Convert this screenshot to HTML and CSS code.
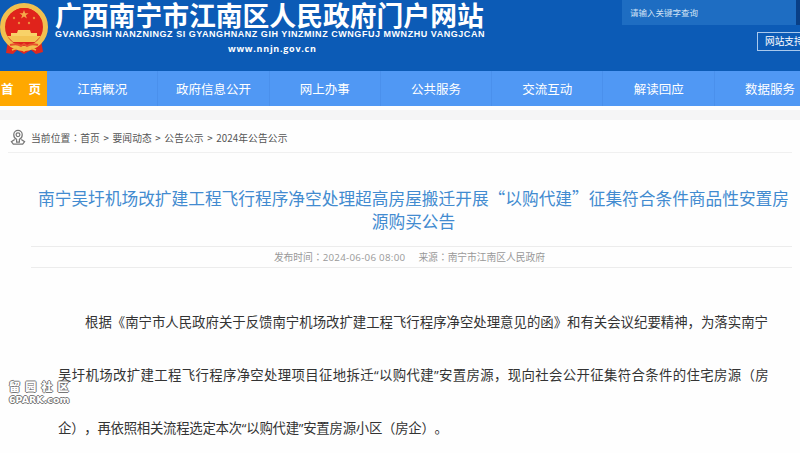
FILE: index.html
```html
<!DOCTYPE html>
<html lang="zh-CN">
<head>
<meta charset="utf-8">
<title>广西南宁市江南区人民政府门户网站</title>
<link rel="stylesheet" href="styles.css">
</head>
<body>
<header class="header">
  <svg class="emblem" viewBox="0 0 48 52">
    <path d="M8 37 L6 50 L13 51 L17 47 L24 51 L31 47 L36 51 L43 49 L41 37Z" fill="#df2820"/>
    <ellipse cx="24" cy="24" rx="21.500" ry="21.500" fill="#d92a1e" stroke="#f1c04f" stroke-width="5"/>
    <circle cx="24" cy="23" r="18" fill="#e0231b"/>
    <path d="M24 7l1.2 3.2h3.4l-2.8 2 1.1 3.3-2.9-2-2.9 2 1.1-3.3-2.8-2h3.4z" fill="#f5a94a"/>
    <g fill="#ee8c3d"><circle cx="14" cy="15" r="1.200"/><circle cx="34" cy="15" r="1.200"/><circle cx="19" cy="20" r="1.200"/><circle cx="29" cy="20" r="1.200"/></g>
    <path d="M18 27h12l1 3h6v3H11v-3h6z" fill="#f8d268"/>
    <path d="M7 33h34l-6 6H13z" fill="#f3c352"/>
    <path d="M10 42q8-2 11 1l3-2 3 2q4-3 11-1" fill="none" stroke="#e8502c" stroke-width="2"/>
    <path d="M12 47l5-2m19 2-5-2M20 45h8l-4 3z" fill="#f2b944" stroke="#f2b944" stroke-width="1.500"/>
  </svg>
  <div class="brand">
    <h1 class="site-name">广西南宁市江南区人民政府门户网站</h1>
    <p class="latin-name">GVANGJSIH NANZNINGZ SI GYANGHNANZ GIH YINZMINZ CWNGFUJ MWNZHU VANGJCAN</p>
    <p class="site-url">www.nnjn.gov.cn</p>
  </div>
  <div class="tools">
    <div class="search"><span class="search-field">请输入关键字查询</span><span class="search-button"></span></div>
    <a class="support">网站支持</a>
  </div>
</header>
<nav class="nav">
  <a class="home">首<span></span>页</a>
  <a class="item">江南概况</a><a class="item">政府信息公开</a><a class="item">网上办事</a><a class="item">公共服务</a><a class="item">交流互动</a><a class="item">解读回应</a><a class="item">数据服务</a>
</nav>
<div class="strip"></div>
<main class="page">
  <div class="crumbs">
    <svg class="pin" viewBox="0 0 17 17" fill="none" stroke="#777" stroke-width="1.300">
      <path d="M5 10.500 1.500 13 3.500 15.500h10l2-2.500L12 10.500"/>
      <path d="M7 13.500V10.500C5 9.500 4 8 4 5.500a4.500 4.500 0 0 1 9 0c0 2.500-1 4-3 5v3z"/>
      <circle cx="8.500" cy="5.500" r="2"/>
    </svg>
    <span class="crumb-text">当前位置<i lang="zh-TW">：</i>首页 &gt; 要闻动态 &gt; 公告公示 &gt; 2024年公告公示</span>
  </div>
  <h2 class="title">南宁吴圩机场改扩建工程飞行程序净空处理超高房屋搬迁开展“以购代建”征集符合条件商品性安置房<br>源购买公告</h2>
  <div class="meta"><span>发布时间<i lang="zh-TW">：</i><span class="date">2024-06-06 08:00</span></span><span>来源<i lang="zh-TW">：</i>南宁市江南区人民政府</span></div>
  <p class="content">根据《南宁市人民政府关于反馈南宁机场改扩建工程飞行程序净空处理意见的函》和有关会议纪要精神，为落实南宁<br><span class="second">吴圩机场改扩建工程飞行程序净空处理项目征地拆迁<q>“</q>以购代建<q>”</q>安置房源，现向社会公开征集符合条件的住宅房源<i lang="zh-TW">（</i>房</span><br><span class="third">企<i lang="zh-TW">）</i>，再依照相关流程选定本次<q>“</q>以购代建<q>”</q>安置房源小区<i lang="zh-TW">（</i>房企<i lang="zh-TW">）</i>。</span></p>
</main>
<div class="watermark"><div class="wm-cn">留园社区</div><div class="wm-en">6PARK.com</div></div>
</body>
</html>
```
FILE: styles.css
```css
* { box-sizing: border-box; }
body {
  margin: 0;
  width: 800px;
  height: 453px;
  overflow: hidden;
  background: #fefefe;
  font-family: "Noto Sans CJK SC", sans-serif;
  text-spacing-trim: space-all;
  white-space: nowrap;
}
h1, h2, p { margin: 0; }
/* centred punctuation */
i { font-family: "Noto Sans CJK TC", sans-serif; font-style: normal; }
.header {
  display: flex;
  height: 71px;
  background: #0c5bb6;
  color: #fff;
  overflow: hidden;
}
.emblem { width: 48px; height: 52px; margin-top: 3px; flex: none; }
.brand { width: 430px; margin-left: 7px; flex: none; }
.site-name {
  font-size: 26.8px;
  line-height: 28px;
  height: 28px;
  padding-top: 1px;
  font-weight: 700;
}
.latin-name {
  margin-top: 1px;
  font: bold 9px/11px "Liberation Sans", sans-serif;
  letter-spacing: 0.54px;
}
.site-url {
  margin: 2px 0 0 173px;
  font: bold 9px/13px "Open Sans", sans-serif;
  letter-spacing: 0.73px;
}
.tools { margin-left: 137px; width: 178px; flex: none; }
.search { display: flex; height: 25px; }
.search-field {
  width: 174px;
  padding-left: 8px;
  background: #1e6dc2;
  color: #d0e2f5;
  font-size: 8.5px;
  line-height: 25px;
}
.search-button { width: 4px; background: #093f86; }
.support {
  display: block;
  width: 60px;
  height: 19px;
  margin: 7px 0 0 135px;
  padding-left: 7px;
  border: 1px solid #a9c9ed;
  font-size: 9.7px;
  line-height: 17px;
}
.nav {
  display: flex;
  height: 34.5px;
  background: #5098f4;
  color: #fff;
  font-size: 12.5px;
  line-height: 36px;
}
.home { width: 47px; flex: none; padding-left: 1px; background: #ffa800; font-weight: 700; }
.home span { display: inline-block; width: 15px; }
.item { width: 111.3px; flex: none; text-align: center; border-right: 1px solid #4a90ec; }
.strip { height: 10px; margin-top: 4.5px; background: #f5f5f6; }
.page { height: 334px; padding: 0 8px; }
.crumbs {
  display: flex;
  align-items: center;
  height: 33px;
  padding: 3px 0 0 2px;
  border-bottom: 1px solid #f0f0f0;
  color: #555;
  font-size: 9.75px;
}
.pin { width: 16px; height: 17px; margin-right: 5px; }
.crumb-text { word-spacing: 1.2px; letter-spacing: 0.1px; }
.title {
  margin: 34px -10px 0 17px;
  color: #428bd0;
  text-align: center;
  font-size: 16.7px;
  line-height: 23px;
  font-weight: 400;
}
.meta {
  display: flex;
  justify-content: center;
  gap: 13px;
  height: 22px;
  margin: 13px 0 0 23px;
  padding-right: 4px;
  border: 1px solid #ececec;
  border-width: 1px 0;
  color: #999;
  font-size: 9.75px;
  line-height: 20px;
}
.date { font-family: "Open Sans", sans-serif; letter-spacing: 0.28px; }
.content {
  margin: 27px 0 0 50px;
  text-indent: 27px;
  color: #333;
  font-size: 13.4px;
  line-height: 52.7px;
}
.second { letter-spacing: 0.35px; }
.third { letter-spacing: -0.26px; }
.content q { font-family: "Open Sans", sans-serif; }
.content q::before, .content q::after { content: none; }
.watermark {
  position: absolute;
  left: 9px;
  top: 378px;
  color: #fff;
  text-shadow: 1px 0 #777, -1px 0 #777, 0 1px #777, 0 -1px #777;
}
.wm-cn { font-size: 11px; line-height: 17px; font-weight: 900; letter-spacing: 5.2px; }
.wm-en { font: bold 9.5px/9px "DejaVu Sans", sans-serif; }
```
